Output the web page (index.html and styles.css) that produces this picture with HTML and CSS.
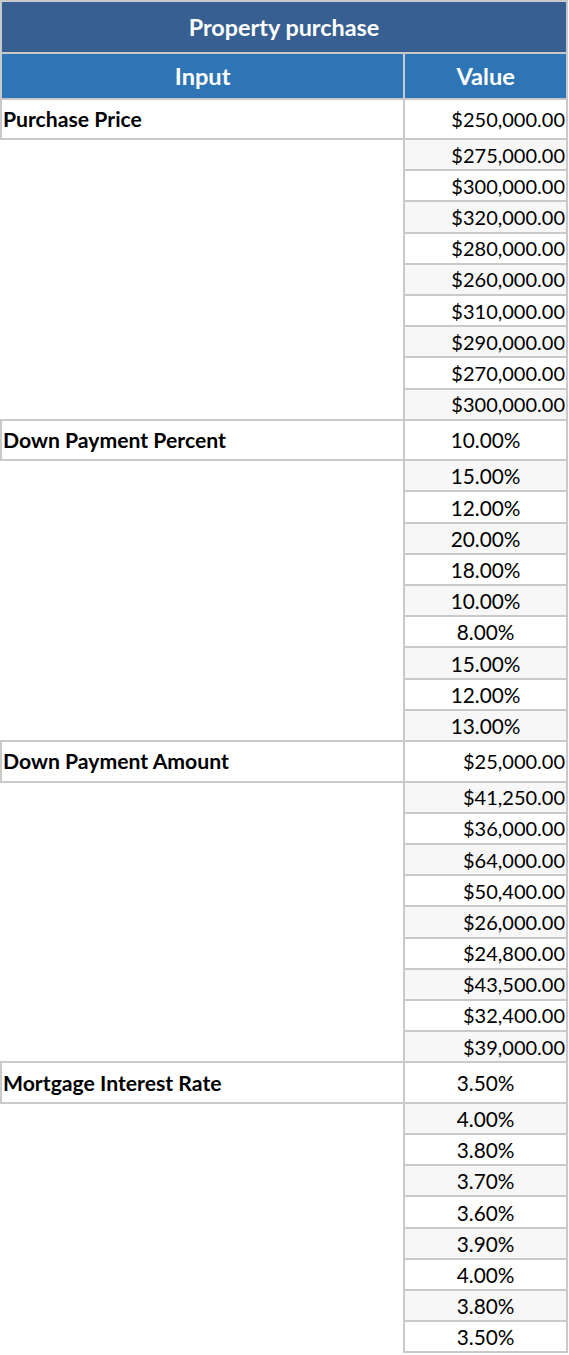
FILE: index.html
```html
<!DOCTYPE html>
<html>
<head>
<meta charset="utf-8">
<link rel="stylesheet" href="styles.css">
</head>
<body>
<table class="sheet">
  <colgroup><col class="c-input"><col class="c-value"></colgroup>
  <thead>
    <tr><th class="title" colspan="2">Property purchase</th></tr>
    <tr><th class="head">Input</th><th class="head">Value</th></tr>
  </thead>
  <tbody>
    <tr class="main first"><td class="label">Purchase Price</td><td class="val money">$250,000.00</td></tr>
    <tr class="sub alt"><td class="empty"></td><td class="val money">$275,000.00</td></tr>
    <tr class="sub"><td class="empty"></td><td class="val money">$300,000.00</td></tr>
    <tr class="sub alt"><td class="empty"></td><td class="val money">$320,000.00</td></tr>
    <tr class="sub"><td class="empty"></td><td class="val money">$280,000.00</td></tr>
    <tr class="sub alt"><td class="empty"></td><td class="val money">$260,000.00</td></tr>
    <tr class="sub"><td class="empty"></td><td class="val money">$310,000.00</td></tr>
    <tr class="sub alt"><td class="empty"></td><td class="val money">$290,000.00</td></tr>
    <tr class="sub"><td class="empty"></td><td class="val money">$270,000.00</td></tr>
    <tr class="sub alt"><td class="empty"></td><td class="val money">$300,000.00</td></tr>

    <tr class="main"><td class="label">Down Payment Percent</td><td class="val pct">10.00%</td></tr>
    <tr class="sub alt"><td class="empty"></td><td class="val pct">15.00%</td></tr>
    <tr class="sub"><td class="empty"></td><td class="val pct">12.00%</td></tr>
    <tr class="sub alt"><td class="empty"></td><td class="val pct">20.00%</td></tr>
    <tr class="sub"><td class="empty"></td><td class="val pct">18.00%</td></tr>
    <tr class="sub alt"><td class="empty"></td><td class="val pct">10.00%</td></tr>
    <tr class="sub"><td class="empty"></td><td class="val pct">8.00%</td></tr>
    <tr class="sub alt"><td class="empty"></td><td class="val pct">15.00%</td></tr>
    <tr class="sub"><td class="empty"></td><td class="val pct">12.00%</td></tr>
    <tr class="sub alt"><td class="empty"></td><td class="val pct">13.00%</td></tr>

    <tr class="main"><td class="label">Down Payment Amount</td><td class="val money">$25,000.00</td></tr>
    <tr class="sub alt"><td class="empty"></td><td class="val money">$41,250.00</td></tr>
    <tr class="sub"><td class="empty"></td><td class="val money">$36,000.00</td></tr>
    <tr class="sub alt"><td class="empty"></td><td class="val money">$64,000.00</td></tr>
    <tr class="sub"><td class="empty"></td><td class="val money">$50,400.00</td></tr>
    <tr class="sub alt"><td class="empty"></td><td class="val money">$26,000.00</td></tr>
    <tr class="sub"><td class="empty"></td><td class="val money">$24,800.00</td></tr>
    <tr class="sub alt"><td class="empty"></td><td class="val money">$43,500.00</td></tr>
    <tr class="sub"><td class="empty"></td><td class="val money">$32,400.00</td></tr>
    <tr class="sub alt"><td class="empty"></td><td class="val money">$39,000.00</td></tr>

    <tr class="main"><td class="label">Mortgage Interest Rate</td><td class="val pct">3.50%</td></tr>
    <tr class="sub alt"><td class="empty"></td><td class="val pct">4.00%</td></tr>
    <tr class="sub"><td class="empty"></td><td class="val pct">3.80%</td></tr>
    <tr class="sub alt"><td class="empty"></td><td class="val pct">3.70%</td></tr>
    <tr class="sub"><td class="empty"></td><td class="val pct">3.60%</td></tr>
    <tr class="sub alt"><td class="empty"></td><td class="val pct">3.90%</td></tr>
    <tr class="sub"><td class="empty"></td><td class="val pct">4.00%</td></tr>
    <tr class="sub alt"><td class="empty"></td><td class="val pct">3.80%</td></tr>
    <tr class="sub"><td class="empty"></td><td class="val pct">3.50%</td></tr>
  </tbody>
</table>
</body>
</html>
```
FILE: styles.css
```css
html, body {
  margin: 0;
  padding: 0;
  background: #ffffff;
}
body {
  font-family: Lato, "Liberation Sans", sans-serif;
  color: #000000;
}
.sheet {
  border-collapse: collapse;
  width: 568px;
  margin: 0;
}
.c-input { width: 405px; }
.c-value { width: 163px; }
.sheet th, .sheet td {
  border: 2px solid #c9c9c9;
  padding: 0;
}
.title {
  background: #375f91;
  color: #ffffff;
  font-weight: 700;
  font-size: 23.4px;
  height: 50px;
  text-align: center;
}
.head {
  background: #2e75b6;
  color: #ffffff;
  font-weight: 700;
  font-size: 23.6px;
  height: 44px;
  text-align: center;
}
.main td {
  height: 38.6px;
  font-size: 20px;
}
.main.first td {
  height: 38px;
}
.sheet td.label {
  font-weight: 700;
  font-size: 21.2px;
  text-align: left;
  padding-left: 1px;
}
.sub td {
  height: 29.2px;
  font-size: 20px;
}
.sheet td.empty {
  border: none;
  background: #ffffff;
}
.sub.alt .val {
  background: #f7f7f7;
}
.sheet td.money {
  text-align: right;
  padding-right: 1px;
}
.sheet td.pct {
  text-align: center;
  font-size: 20.8px;
}
```
